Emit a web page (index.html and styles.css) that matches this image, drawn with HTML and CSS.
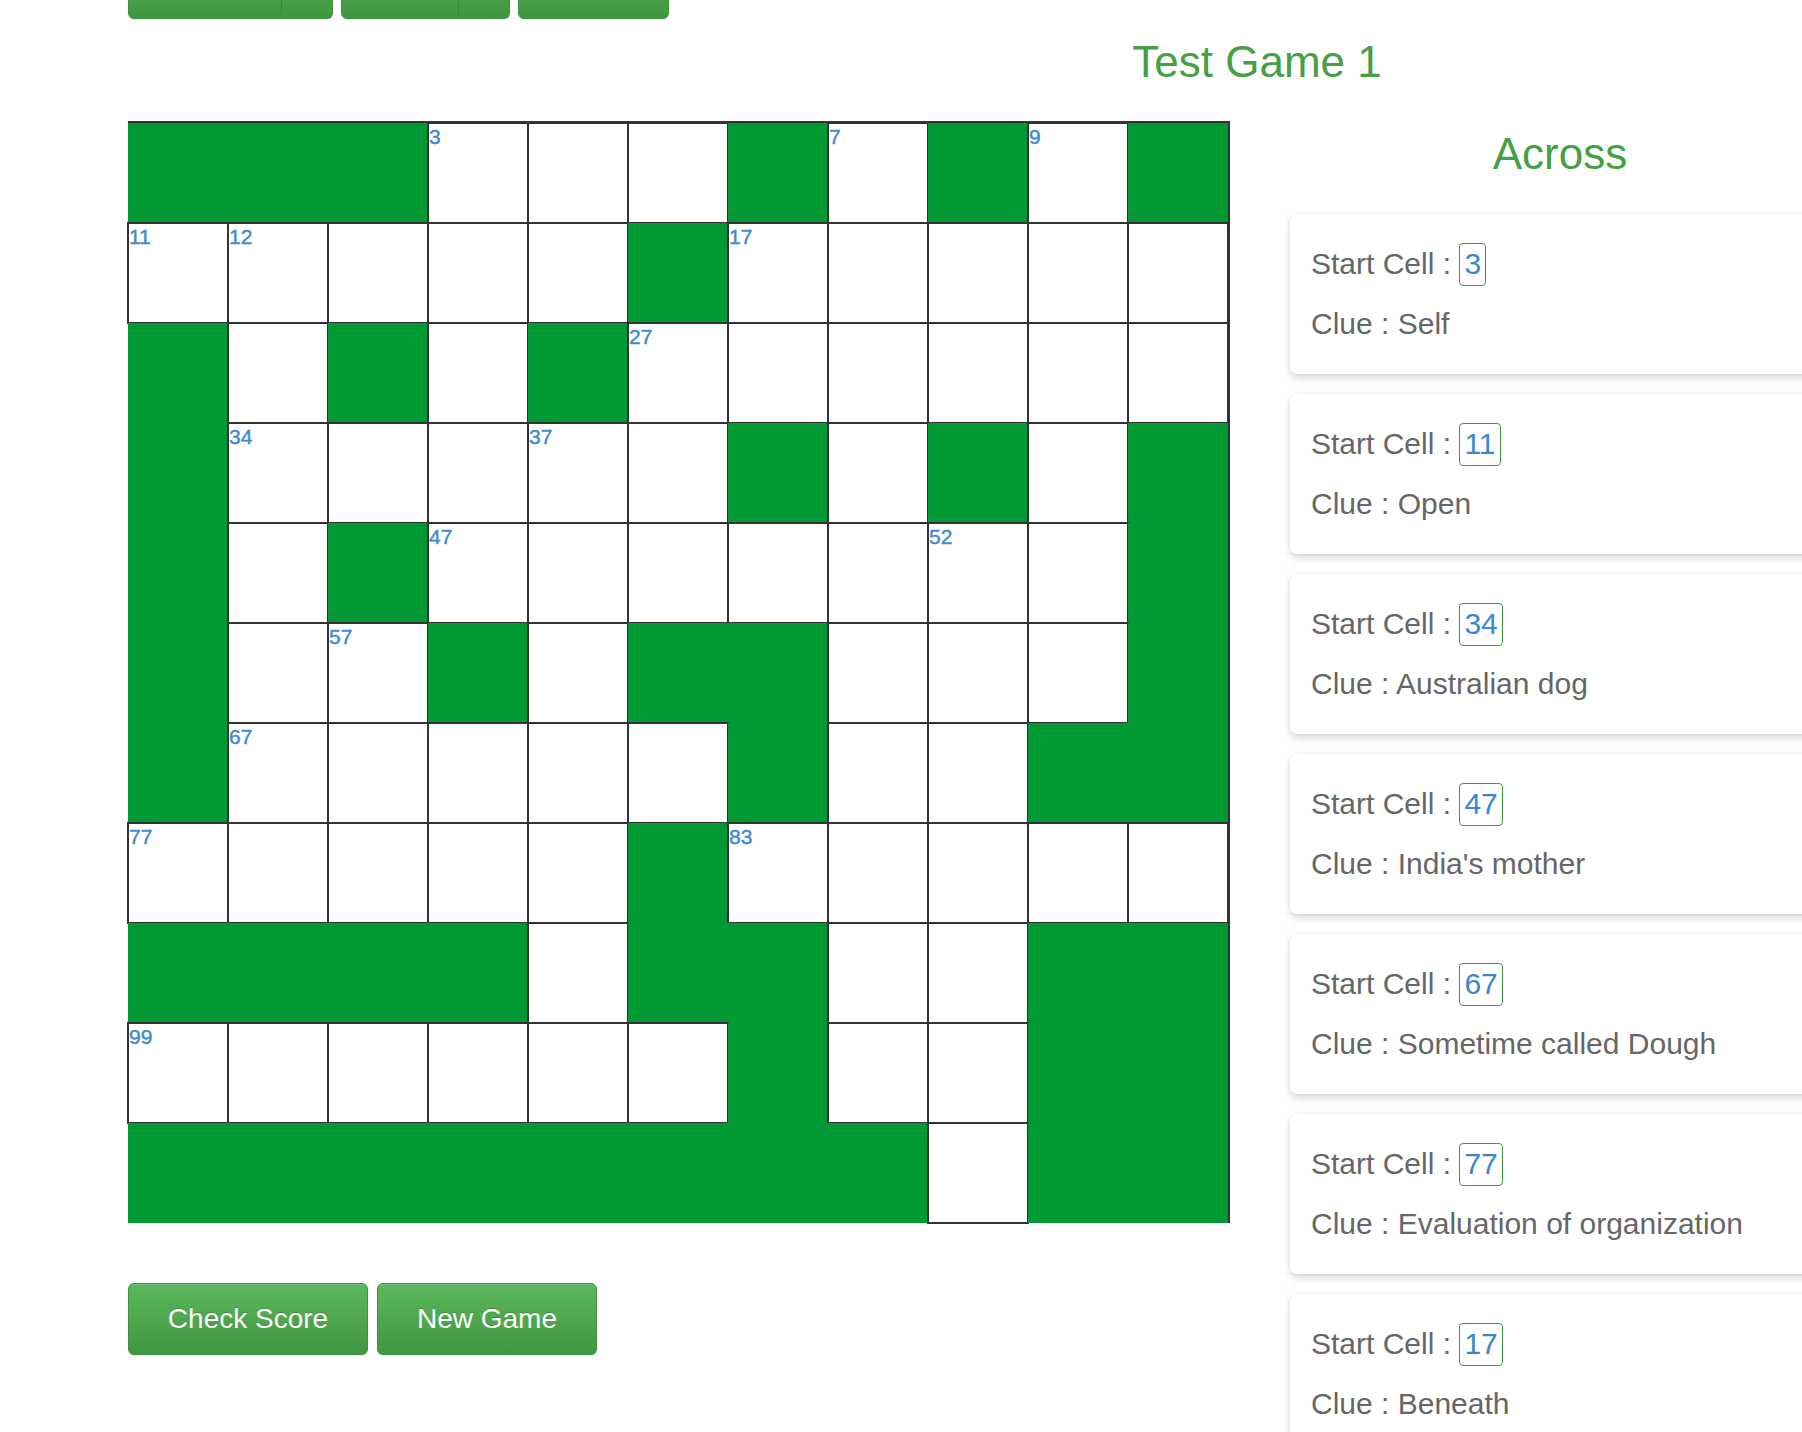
FILE: index.html
```html
<!DOCTYPE html>
<html lang="en">
<head>
<meta charset="utf-8">
<title>Crossword - Test Game 1</title>
<link rel="stylesheet" href="styles.css">
</head>
<body>
<div class="page">
  <div class="toolbar">
    <div class="btn-group">
      <button class="btn btn-top btn-main1" aria-label="Games"></button>
      <button class="btn btn-top btn-caret" aria-label="More games"></button>
    </div>
    <div class="btn-group">
      <button class="btn btn-top btn-main2" aria-label="Level"></button>
      <button class="btn btn-top btn-caret" aria-label="More levels"></button>
    </div>
    <button class="btn btn-top btn-solo" aria-label="Help"></button>
  </div>

  <h1 class="title">Test Game 1</h1>

  <div class="main">
    <div class="left">
      <div class="board">
        <!-- row 0 -->
        <div class="b"></div><div class="b"></div><div class="b"></div><div class="c"><span class="n">3</span></div><div class="c"></div><div class="c"></div><div class="b"></div><div class="c"><span class="n">7</span></div><div class="b"></div><div class="c"><span class="n">9</span></div><div class="b"></div>
        <!-- row 1 -->
        <div class="c"><span class="n">11</span></div><div class="c"><span class="n">12</span></div><div class="c"></div><div class="c"></div><div class="c"></div><div class="b"></div><div class="c"><span class="n">17</span></div><div class="c"></div><div class="c"></div><div class="c"></div><div class="c"></div>
        <!-- row 2 -->
        <div class="b"></div><div class="c"></div><div class="b"></div><div class="c"></div><div class="b"></div><div class="c"><span class="n">27</span></div><div class="c"></div><div class="c"></div><div class="c"></div><div class="c"></div><div class="c"></div>
        <!-- row 3 -->
        <div class="b"></div><div class="c"><span class="n">34</span></div><div class="c"></div><div class="c"></div><div class="c"><span class="n">37</span></div><div class="c"></div><div class="b"></div><div class="c"></div><div class="b"></div><div class="c"></div><div class="b"></div>
        <!-- row 4 -->
        <div class="b"></div><div class="c"></div><div class="b"></div><div class="c"><span class="n">47</span></div><div class="c"></div><div class="c"></div><div class="c"></div><div class="c"></div><div class="c"><span class="n">52</span></div><div class="c"></div><div class="b"></div>
        <!-- row 5 -->
        <div class="b"></div><div class="c"></div><div class="c"><span class="n">57</span></div><div class="b"></div><div class="c"></div><div class="b"></div><div class="b"></div><div class="c"></div><div class="c"></div><div class="c"></div><div class="b"></div>
        <!-- row 6 -->
        <div class="b"></div><div class="c"><span class="n">67</span></div><div class="c"></div><div class="c"></div><div class="c"></div><div class="c"></div><div class="b"></div><div class="c"></div><div class="c"></div><div class="b"></div><div class="b"></div>
        <!-- row 7 -->
        <div class="c"><span class="n">77</span></div><div class="c"></div><div class="c"></div><div class="c"></div><div class="c"></div><div class="b"></div><div class="c"><span class="n">83</span></div><div class="c"></div><div class="c"></div><div class="c"></div><div class="c"></div>
        <!-- row 8 -->
        <div class="b"></div><div class="b"></div><div class="b"></div><div class="b"></div><div class="c"></div><div class="b"></div><div class="b"></div><div class="c"></div><div class="c"></div><div class="b"></div><div class="b"></div>
        <!-- row 9 -->
        <div class="c"><span class="n">99</span></div><div class="c"></div><div class="c"></div><div class="c"></div><div class="c"></div><div class="c"></div><div class="b"></div><div class="c"></div><div class="c"></div><div class="b"></div><div class="b"></div>
        <!-- row 10 -->
        <div class="b"></div><div class="b"></div><div class="b"></div><div class="b"></div><div class="b"></div><div class="b"></div><div class="b"></div><div class="b"></div><div class="c"></div><div class="b"></div><div class="b"></div>
      </div>

      <div class="actions">
        <button class="btn btn-lg btn-check">Check Score</button>
        <button class="btn btn-lg btn-new">New Game</button>
      </div>
    </div>

    <div class="right">
      <h2 class="heading">Across</h2>
      <div class="card">
        <p class="line">Start Cell : <span class="badge">3</span></p>
        <p class="line">Clue : Self</p>
      </div>
      <div class="card">
        <p class="line">Start Cell : <span class="badge">11</span></p>
        <p class="line">Clue : Open</p>
      </div>
      <div class="card">
        <p class="line">Start Cell : <span class="badge">34</span></p>
        <p class="line">Clue : Australian dog</p>
      </div>
      <div class="card">
        <p class="line">Start Cell : <span class="badge">47</span></p>
        <p class="line">Clue : India's mother</p>
      </div>
      <div class="card">
        <p class="line">Start Cell : <span class="badge">67</span></p>
        <p class="line">Clue : Sometime called Dough</p>
      </div>
      <div class="card">
        <p class="line">Start Cell : <span class="badge">77</span></p>
        <p class="line">Clue : Evaluation of organization</p>
      </div>
      <div class="card">
        <p class="line">Start Cell : <span class="badge">17</span></p>
        <p class="line">Clue : Beneath</p>
      </div>
    </div>
  </div>
</div>
</body>
</html>
```

FILE: styles.css
```css
html, body {
  margin: 0;
  padding: 0;
  background: #ffffff;
  overflow: hidden;
}

body {
  font-family: "Liberation Sans", Arial, Helvetica, sans-serif;
  color: #666666;
}

.page {
  padding-left: 128px;
}

/* ---------- buttons ---------- */
.btn {
  box-sizing: border-box;
  font-family: "Liberation Sans", Arial, Helvetica, sans-serif;
  color: #ffffff;
  background-color: #5cb85c;
  background-image: linear-gradient(to bottom, #5cb85c 0%, #419641 100%);
  border: 1px solid #3e8f3e;
  text-shadow: 0 -1px 0 rgba(0, 0, 0, 0.2);
  box-shadow: inset 0 1px 0 rgba(255, 255, 255, 0.15), 0 1px 1px rgba(0, 0, 0, 0.075);
  cursor: pointer;
  margin: 0;
  padding: 0;
  white-space: nowrap;
  text-align: center;
}

.toolbar {
  display: flex;
  gap: 8px;
  margin-top: -31px;
  height: 50px;
}

.btn-group {
  display: flex;
}

.btn-top {
  height: 50px;
  border-radius: 6px;
  background-image: linear-gradient(to bottom, #58b358 0%, #479f47 60%, #419641 100%);
}

.btn-group .btn-top:first-child {
  border-top-right-radius: 0;
  border-bottom-right-radius: 0;
}

.btn-group .btn-caret {
  border-top-left-radius: 0;
  border-bottom-left-radius: 0;
  border-left-color: #3a8a3a;
  margin-left: -1px;
  width: 52px;
}

.btn-main1 { width: 154px; }
.btn-main2 { width: 118px; }
.btn-solo { width: 151px; }

.btn-lg {
  height: 72px;
  font-size: 28px;
  line-height: 70px;
  border-radius: 6px;
}

.btn-check { width: 240px; }
.btn-new { width: 220px; }

.actions {
  display: flex;
  gap: 9px;
  margin-top: 60px;
}

/* ---------- title ---------- */
.title {
  width: 2258px;
  margin: 19px 0 35px;
  font-size: 44px;
  line-height: 1.1;
  font-weight: normal;
  color: #43a043;
  text-align: center;
}

/* ---------- layout ---------- */
.main {
  display: flex;
  align-items: flex-start;
}

.left {
  width: 1102px;
  flex: none;
}

.right {
  width: 580px;
  margin-left: 40px;
  flex: none;
}

/* ---------- board ---------- */
.board {
  width: 1100px;
  display: grid;
  grid-template-columns: repeat(11, 100px);
  grid-auto-rows: 100px;
  border-top: 2px solid #333333;
  border-right: 2px solid #333333;
}

.b {
  background: #009933;
}

.c {
  background: #ffffff;
  box-sizing: border-box;
  border: 1px solid #333333;
  outline: 1px solid #333333;
  padding-top: 1px;
}

.n {
  display: block;
  font-size: 21px;
  line-height: 24px;
  font-weight: normal;
  color: #3f8bd0;
  -webkit-text-stroke: 0.45px #3f8bd0;
}

/* ---------- clues ---------- */
.heading {
  margin: 9px 0 35px;
  font-size: 44px;
  line-height: 1.1;
  font-weight: normal;
  color: #43a043;
  text-align: center;
}

.card {
  box-sizing: border-box;
  width: 560px;
  height: 160px;
  margin: 0 0 20px 20px;
  padding: 28px 20px 29px 21px;
  background: #ffffff;
  border-radius: 7px;
  box-shadow: 0 4px 9px rgba(0, 0, 0, 0.16), 0 0 3px rgba(0, 0, 0, 0.06);
}

.line {
  margin: 0;
  font-size: 30px;
  line-height: 43px;
  height: 43px;
  color: #666666;
}

.line + .line {
  margin-top: 17px;
}

.badge {
  display: inline-block;
  box-sizing: border-box;
  height: 43px;
  line-height: 40px;
  padding: 0 4px;
  border: 1.5px solid #3c9c3c;
  border-radius: 4px;
  color: #3a87cf;
}
```
